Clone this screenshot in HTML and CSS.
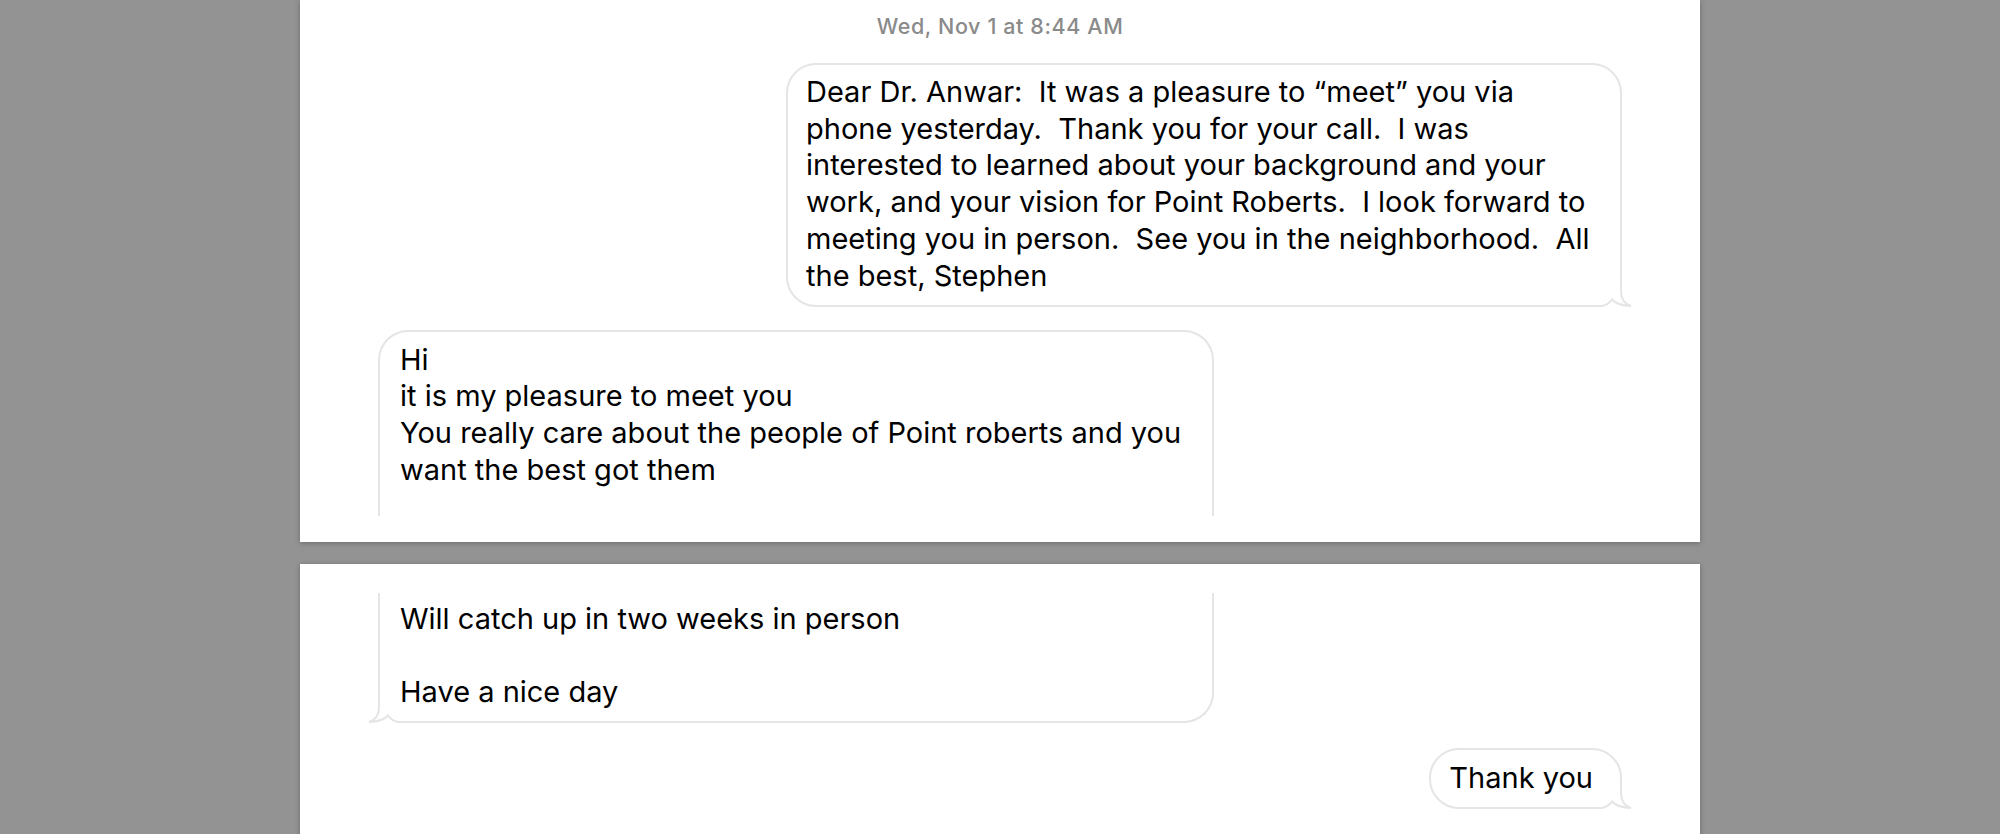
FILE: index.html
```html
<!DOCTYPE html>
<html lang="en">
<head>
<meta charset="utf-8">
<title>Messages</title>
<link rel="stylesheet" href="styles.css">
</head>
<body>
<main class="viewer">
  <section class="page page-first">
    <div class="stamp">Wed, Nov 1 at 8:44 AM</div>
    <div class="bubble sent wide"><svg class="tail tail-right" width="42" height="28" viewBox="0 0 42 28"><path class="tail-fill" d="M0 27 L12 27 Q18 26 22 20.5 Q27 26.5 41 27 Q31 24 31 12 L31 0 L0 0 Z"/><path class="tail-line" d="M0 27 L12 27 Q18 26 22 20.5 Q27 26.5 41 27 Q31 24 31 12 L31 0"/></svg><span class="txt">Dear Dr. Anwar:  It was a pleasure to “meet” you via<br>phone yesterday.  Thank you for your call.  I was<br>interested to learned about your background and your<br>work, and your vision for Point Roberts.  I look forward to<br>meeting you in person.  See you in the neighborhood.  All<br>the best, Stephen</span></div>
    <div class="bubble received wide cut-bottom"><span class="txt">Hi<br>it is my pleasure to meet you<br>You really care about the people of Point roberts and you<br>want the best got them</span></div>
  </section>
  <section class="page page-second">
    <div class="bubble received wide cut-top"><svg class="tail tail-left" width="42" height="28" viewBox="0 0 42 28"><path class="tail-fill" d="M0 27 L12 27 Q18 26 22 20.5 Q27 26.5 41 27 Q31 24 31 12 L31 0 L0 0 Z"/><path class="tail-line" d="M0 27 L12 27 Q18 26 22 20.5 Q27 26.5 41 27 Q31 24 31 12 L31 0"/></svg><span class="txt">Will catch up in two weeks in person<br><br>Have a nice day</span></div>
    <div class="bubble sent"><svg class="tail tail-right" width="42" height="28" viewBox="0 0 42 28"><path class="tail-fill" d="M0 27 L12 27 Q18 26 22 20.5 Q27 26.5 41 27 Q31 24 31 12 L31 0 L0 0 Z"/><path class="tail-line" d="M0 27 L12 27 Q18 26 22 20.5 Q27 26.5 41 27 Q31 24 31 12 L31 0"/></svg><span class="txt">Thank you</span></div>
  </section>
</main>
</body>
</html>
```

FILE: styles.css
```css
html, body {
  margin: 0;
  padding: 0;
  background: #939393;
  height: 100%;
  overflow: hidden;
}

.viewer {
  display: flex;
  flex-direction: column;
  align-items: center;
  gap: 22px;
}

.page {
  width: 1400px;
  box-sizing: border-box;
  background: #ffffff;
  box-shadow: 0 1px 5px rgba(0, 0, 0, 0.28);
  display: flex;
  flex-direction: column;
  padding: 0 78px;
  font-family: Inter, "Liberation Sans", Arial, sans-serif;
}

.page-first {
  gap: 23.5px;
  padding-top: 13px;
  padding-bottom: 26px;
}

.page-second {
  gap: 25px;
  padding-top: 29px;
  padding-bottom: 40px;
}

.stamp {
  text-align: center;
  font-size: 21.5px;
  font-weight: 500;
  line-height: 26px;
  color: #8a8a8a;
  letter-spacing: 0.6px;
}

.bubble {
  position: relative;
  box-sizing: border-box;
  border: 2px solid #e5e5e5;
  border-radius: 30px;
  background: #ffffff;
  color: #000000;
  font-size: 29px;
  line-height: 36.7px;
  white-space: pre;
  padding: 9.5px 27px 10.5px 18px;
  width: fit-content;
}

.bubble.wide {
  width: 836px;
}

.txt {
  position: relative;
}

.sent {
  align-self: flex-end;
}

.received {
  align-self: flex-start;
  padding-left: 20px;
}

.cut-bottom {
  border-bottom: none;
  border-bottom-left-radius: 0;
  border-bottom-right-radius: 0;
  padding-bottom: 27px;
}

.cut-top {
  border-top: none;
  border-top-left-radius: 0;
  border-top-right-radius: 0;
  padding-top: 8px;
}

.tail {
  position: absolute;
  bottom: -2px;
  display: block;
}

.tail-right {
  right: -12px;
}

.tail-left {
  left: -12px;
  transform: scaleX(-1);
}

.tail-fill {
  fill: #ffffff;
}

.tail-line {
  fill: none;
  stroke: #e5e5e5;
  stroke-width: 2;
}
```
